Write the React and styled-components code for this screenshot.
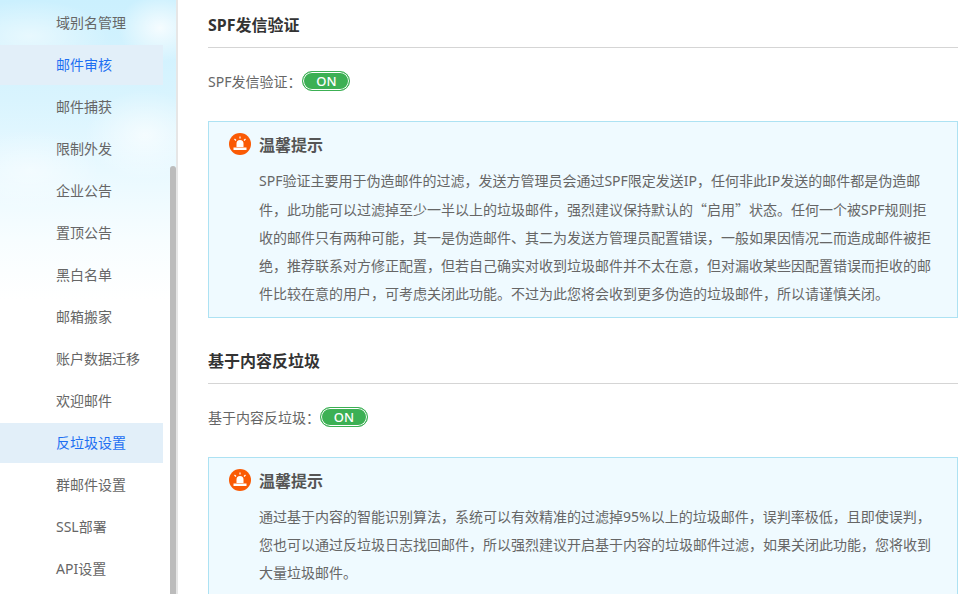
import React from 'react'
import styled, { createGlobalStyle } from 'styled-components'

const GlobalStyle = createGlobalStyle`
  html, body {
    margin: 0;
    padding: 0;
    height: 100%;
    overflow: hidden;
    background: #fff;
    font-family: "Noto Sans", "Noto Sans CJK SC", sans-serif;
  }
`

const Page = styled.div`
  display: flex;
  width: 978px;
  height: 594px;
  overflow: hidden;
`

const Sidebar = styled.aside`
  position: relative;
  flex: none;
  box-sizing: border-box;
  width: 178px;
  height: 594px;
  padding-top: 3px;
  overflow: hidden;
  border-right: 2px solid #e6e6e6;
  background:
    radial-gradient(ellipse 42px 34px at 160px 28px, rgba(255, 255, 255, 0.8), transparent),
    radial-gradient(ellipse 80px 36px at 30px 36px, rgba(255, 255, 255, 0.5), transparent),
    radial-gradient(ellipse 60px 45px at 145px 135px, rgba(255, 255, 255, 0.65), transparent),
    radial-gradient(ellipse 70px 40px at 30px 170px, rgba(255, 255, 255, 0.45), transparent),
    linear-gradient(180deg, #cbf0fe 0, #d9f4fe 100px, #e9f9ff 170px, #f7fdff 240px, #fff 300px);
`

const Menu = styled.ul`
  display: flex;
  flex-direction: column;
  gap: 2px;
  width: 163px;
  margin: 0;
  padding: 0;
  list-style: none;
`

const MenuItem = styled.li`
  height: 40px;
  padding-left: 56px;
  font-size: 14px;
  line-height: 40px;
  color: ${(props) => (props.$active ? '#1d6ff2' : '#666')};
  background: ${(props) => (props.$active ? '#e2eff9' : 'transparent')};
`

const ScrollThumb = styled.div`
  position: absolute;
  top: 166px;
  bottom: 0;
  left: 170px;
  width: 6px;
  border-radius: 3px 3px 0 0;
  background: #bcbcbc;
`

const Main = styled.main`
  flex: none;
  width: 750px;
  margin-left: 30px;
`

const Section = styled.section`
  margin-bottom: 18px;
`

const Title = styled.h2`
  height: 47px;
  margin: 0;
  border-bottom: 1px solid #d5d5d5;
  font-size: 16px;
  font-weight: 700;
  line-height: 50px;
  color: #333;
`

const SwitchRow = styled.div`
  display: flex;
  align-items: center;
  height: 20px;
  margin: 23px 0 30px;
  font-size: 14px;
  color: #666;
`

const Toggle = styled.span`
  box-sizing: border-box;
  width: 48px;
  height: 20px;
  margin-left: ${(props) => props.$gap}px;
  border: 1px solid #3cb054;
  border-radius: 10px;
  background: #3cb054;
  box-shadow: inset 0 0 0 1px #fff;
  font-size: 13px;
  font-weight: 500;
  line-height: 18px;
  text-align: center;
  color: #fff;
`

const Notice = styled.div`
  box-sizing: border-box;
  padding: 9px 24px 9px 20px;
  border: 1px solid #ade2f3;
  background: #effaff;
`

const NoticeHead = styled.div`
  display: flex;
  align-items: center;
  gap: 8px;
  height: 26px;
  margin-bottom: 10px;
  font-size: 16px;
  font-weight: 700;
  color: #555;
`

const NoticeText = styled.p`
  margin: 0 0 0 30px;
  font-size: 14px;
  line-height: 28px;
  color: #666;
`

const Quoted = styled.span`
  font-family: "Noto Sans CJK SC", sans-serif;
`

const AlarmIcon = () => (
  <svg width="22" height="22" viewBox="0 0 22 22">
    <circle cx="11" cy="11" r="11" fill="#fa5a05" />
    <path d="M7.5 14V10.5a3.5 3.5 0 0 1 7 0V14z" fill="#fff" />
    <rect x="4.5" y="14.5" width="13" height="2.5" fill="#fff" />
    <path d="M11 3.5v2M5.5 6l1.5 1.5M16.5 6 15 7.5" stroke="#fff" strokeWidth="1.2" />
  </svg>
)

const items = [
  '域别名管理', '邮件审核', '邮件捕获', '限制外发', '企业公告', '置顶公告', '黑白名单',
  '邮箱搬家', '账户数据迁移', '欢迎邮件', '反垃圾设置', '群邮件设置', 'SSL部署', 'API设置',
]

const sections = [
  {
    title: 'SPF发信验证',
    label: 'SPF发信验证：',
    gap: 1,
    text: (
      <>
        SPF验证主要用于伪造邮件的过滤，发送方管理员会通过SPF限定发送IP，任何非此IP发送的邮件都是伪造邮件，此功能可以过滤掉至少一半以上的垃圾邮件，强烈建议保持默认的<Quoted>“启用”</Quoted>状态。任何一个被SPF规则拒收的邮件只有两种可能，其一是伪造邮件、其二为发送方管理员配置错误，一般如果因情况二而造成邮件被拒绝，推荐联系对方修正配置，但若自己确实对收到垃圾邮件并不太在意，但对漏收某些因配置错误而拒收的邮件比较在意的用户，可考虑关闭此功能。不过为此您将会收到更多伪造的垃圾邮件，所以请谨慎关闭。
      </>
    ),
  },
  {
    title: '基于内容反垃圾',
    label: '基于内容反垃圾：',
    gap: 0,
    text: '通过基于内容的智能识别算法，系统可以有效精准的过滤掉95%以上的垃圾邮件，误判率极低，且即使误判，您也可以通过反垃圾日志找回邮件，所以强烈建议开启基于内容的垃圾邮件过滤，如果关闭此功能，您将收到大量垃圾邮件。',
  },
]

const App = () => (
  <Page>
    <GlobalStyle />
    <Sidebar>
      <Menu>
        {items.map((item) => (
          <MenuItem key={item} $active={item === '邮件审核' || item === '反垃圾设置'}>{item}</MenuItem>
        ))}
      </Menu>
      <ScrollThumb />
    </Sidebar>
    <Main>
      {sections.map((section) => (
        <Section key={section.title}>
          <Title>{section.title}</Title>
          <SwitchRow>
            {section.label}
            <Toggle $gap={section.gap}>ON</Toggle>
          </SwitchRow>
          <Notice>
            <NoticeHead>
              <AlarmIcon />
              温馨提示
            </NoticeHead>
            <NoticeText>{section.text}</NoticeText>
          </Notice>
        </Section>
      ))}
    </Main>
  </Page>
)

export default App
